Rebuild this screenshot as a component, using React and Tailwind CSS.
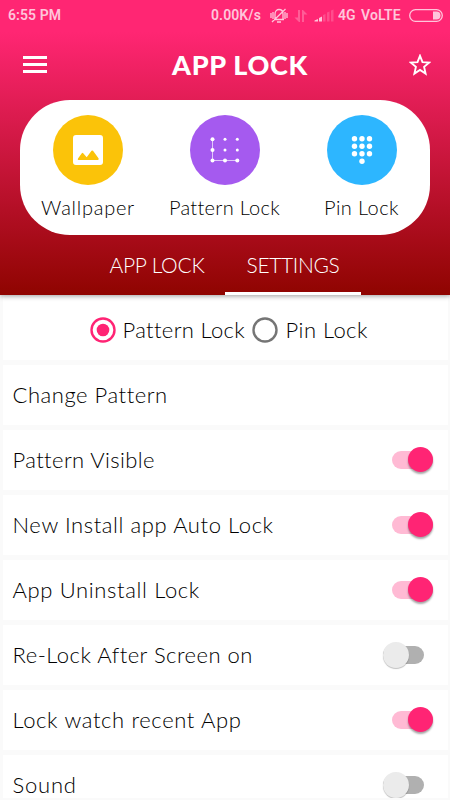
import React from "react";

const quickActions = [
  { label: "Wallpaper", circle: "bg-[#fbc309]", text: "tracking-[0.75px]", cell: "w-[136px]", icon: <WallpaperIcon /> },
  { label: "Pattern Lock", circle: "bg-[#a55aef]", text: "tracking-[0.3px]", cell: "w-[137px]", icon: <PatternIcon /> },
  { label: "Pin Lock", circle: "bg-[#2db6ff]", text: "tracking-[0.4px]", cell: "w-[137px]", icon: <PinIcon /> },
];

const settings = [
  { label: "Change Pattern", text: "tracking-[0.55px]" },
  { label: "Pattern Visible", text: "tracking-[0.4px]", on: true },
  { label: "New Install app Auto Lock", text: "tracking-[0.6px]", on: true },
  { label: "App Uninstall Lock", text: "tracking-[0.65px]", on: true },
  { label: "Re-Lock After Screen on", text: "tracking-[0.5px]", on: false },
  { label: "Lock watch recent App", text: "tracking-[0.64px]", on: true },
];

function WallpaperIcon() {
  return (
    <svg width="30" height="30" viewBox="0 0 30 30" className="block">
      <path fill="#fff" fillRule="evenodd" d="M3 0h24a3 3 0 0 1 3 3v24a3 3 0 0 1-3 3H3a3 3 0 0 1-3-3V3a3 3 0 0 1 3-3ZM5 23.5Q4.300 25 5.500 25H25Q26.200 24.500 25.500 23.300L20 15.800Q19.200 15 18.500 15.800L13.700 22.300L10.200 18.200Q9.500 17.500 8.800 18.300Z" />
    </svg>
  );
}

function PatternIcon() {
  return (
    <svg width="30" height="26" viewBox="0 0 30 26" fill="#fff" className="block">
      <path d="M2.500 2V23.500H27.500" fill="none" stroke="#fff" strokeOpacity=".65" strokeWidth="1" />
      {[2.200, 13, 23.500].map((y) =>
        [2.500, 15, 27.300].map((x) => (
          <circle key={`${x}-${y}`} cx={x} cy={y} r={x < 5 || y > 20 ? 2 : 1.500} />
        ))
      )}
    </svg>
  );
}

function PinIcon() {
  return (
    <svg width="22" height="30" viewBox="0 0 22 30" fill="#fff" className="block">
      {[3.700, 11.200, 18.700].map((y) =>
        [3.500, 11, 18.500].map((x) => <circle key={`${x}-${y}`} cx={x} cy={y} r="2.700" />)
      )}
      <circle cx="11" cy="26.200" r="2.700" />
    </svg>
  );
}

function StatusBar() {
  return (
    <div className="flex h-[30px] items-center pl-[8px] pt-px font-['Roboto',sans-serif] text-[14px] font-semibold text-[#ffc5db]">
      <span className="w-[203px] whitespace-nowrap tracking-[0.1px]">6:55 PM</span>
      <span className="w-[59px] whitespace-nowrap tracking-[0.1px]">0.00K/s</span>
      <svg width="18" height="16" viewBox="0 0 18 16" fill="none" stroke="currentColor" strokeWidth="1.300" className="mr-[6px]">
        <path d="M4 11.500h10M5 11V6c0-6 8-6 8 0v5M7 14h4M1 5v5M3 4v7M15 4v7M17 5v5M2 14 15.500 1" />
      </svg>
      <svg width="14" height="14" viewBox="0 0 14 14" fill="currentColor" fillOpacity=".35" className="mr-[6px]">
        <path d="M4 1h2v12H5L.5 8.500H4ZM8 13V1h1l4.500 4.500H10V13Z" />
      </svg>
      <svg width="20" height="13" viewBox="0 0 20 13" fill="currentColor" className="mr-[4px]">
        <path d="M.5 12.500V11.500l3.500-1.500v2.500ZM5 12.500V9l3-1.500v5Z" />
        <path fillOpacity=".25" d="M9 12.500V6l2.500-1v7.500ZM13 12.500V3.500l2.500-1v10ZM17 12.500V1.500l2.500-1v12Z" />
      </svg>
      <span className="w-[23px] whitespace-nowrap">4G</span>
      <span className="w-[48px] whitespace-nowrap tracking-[0.15px]">VoLTE</span>
      <svg width="34" height="13" viewBox="0 0 34 13" className="block">
        <rect x=".700" y=".700" width="32.600" height="11.600" rx="5.800" fill="none" stroke="currentColor" strokeWidth="1.300" />
        <path fill="currentColor" d="M24 2.500h3.500a4 4 0 0 1 0 8H24Z" />
      </svg>
    </div>
  );
}

function Radio({ checked }) {
  return (
    <svg width="26" height="26" viewBox="0 0 26 26" className="block shrink-0">
      <circle cx="13" cy="13" r="11.500" fill="none" stroke={checked ? "#ff2474" : "#757575"} strokeWidth="2.400" />
      {checked && <circle cx="13" cy="13" r="6.300" fill="#ff2474" />}
    </svg>
  );
}

function Toggle({ on }) {
  return on ? (
    <div className="mr-[15px] flex h-[18px] w-[41px] items-center justify-end rounded-full bg-[#ffbad4]">
      <div className="mb-px size-[25px] shrink-0 rounded-full bg-[#ff2474] shadow-[0_2px_2px_rgba(0,0,0,0.35)]" />
    </div>
  ) : (
    <div className="mr-[24px] flex h-[18px] w-[41px] items-center rounded-full bg-[#b0b0b0]">
      <div className="size-[26px] shrink-0 rounded-full bg-[#ebebeb] shadow-[0_1px_1px_rgba(0,0,0,0.25)]" />
    </div>
  );
}

function SettingRow({ label, text, on }) {
  return (
    <div className="flex h-[60px] shrink-0 items-center justify-between bg-white pl-[10px]">
      <span className={`whitespace-nowrap text-[22px] leading-[26px] ${text}`}>{label}</span>
      {on !== undefined && <Toggle on={on} />}
    </div>
  );
}

export default function App() {
  return (
    <div className="flex h-[800px] w-[450px] flex-col overflow-hidden bg-[#fafafa] font-['Lato',sans-serif] font-light text-black">
      <header className="z-10 flex h-[295px] shrink-0 flex-col bg-[linear-gradient(180deg,#ff2673_0px,#ff2673_32px,#8f0400_295px)] shadow-[0_1px_5px_rgba(0,0,0,0.4)]">
        <StatusBar />
        <div className="flex h-[70px] items-center pl-[23px] pr-[19px]">
          <div className="mb-px flex w-[24px] shrink-0 flex-col gap-[4px]">
            <div className="h-[3px] bg-white" />
            <div className="h-[3px] bg-white" />
            <div className="h-[3px] bg-white" />
          </div>
          <h1 className="flex-1 whitespace-nowrap pl-[125px] text-[27px] font-black tracking-[0.7px] text-white">APP LOCK</h1>
          <svg width="22" height="22" viewBox="0 0 22 22" fill="none" stroke="#fff" strokeWidth="1.900" className="block shrink-0">
            <path d="m11 1.800 2.500 6.300 6.600.500-5 4.300 1.500 6.700-5.600-3.600-5.600 3.600 1.500-6.700-5-4.300 6.600-.5Z" />
          </svg>
        </div>
        <div className="mx-[20px] flex h-[135px] shrink-0 rounded-[50px] bg-white">
          {quickActions.map((a) => (
            <div key={a.label} className={`flex shrink-0 flex-col items-center pt-[15px] ${a.cell}`}>
              <div className={`flex size-[70px] items-center justify-center rounded-full ${a.circle}`}>{a.icon}</div>
              <span className={`mt-[9px] whitespace-nowrap text-[20px] leading-[26px] ${a.text}`}>{a.label}</span>
            </div>
          ))}
        </div>
        <div className="flex h-[60px] justify-center text-[21px] font-light text-white">
          <div className="flex w-[136px] items-center justify-center whitespace-nowrap tracking-[-0.25px]">APP LOCK</div>
          <div className="flex w-[136px] items-center justify-center whitespace-nowrap border-b-[3px] border-white pt-[3px] tracking-[-0.35px]">SETTINGS</div>
        </div>
      </header>
      <main className="flex min-h-0 flex-1 flex-col gap-[5px] pl-[2.500px] pr-[2px]">
        <div className="flex h-[65px] shrink-0 items-center bg-white pl-[87px] pt-[5px] text-[22px]">
          <Radio checked />
          <span className="mb-[2px] ml-[7px] w-[129px] whitespace-nowrap tracking-[0.35px]">Pattern Lock</span>
          <Radio />
          <span className="mb-[2px] ml-[8px] whitespace-nowrap tracking-[0.45px]">Pin Lock</span>
        </div>
        {settings.map((s) => (
          <SettingRow key={s.label} {...s} />
        ))}
        <div className="h-[43px] shrink-0 overflow-hidden">
          <SettingRow label="Sound" text="tracking-[0.8px]" on={false} />
        </div>
      </main>
    </div>
  );
}
